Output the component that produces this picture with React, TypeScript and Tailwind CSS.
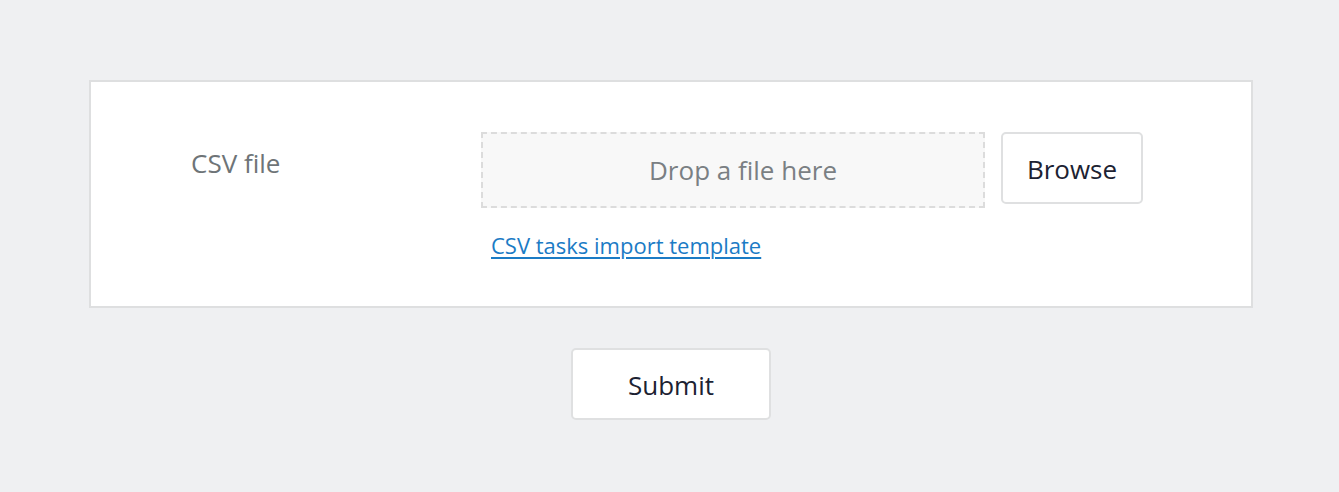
import React from "react";

export default function App() {
  return (
    <div
      className="min-h-[492px] w-full bg-[#eff0f2] pt-[80px]"
      style={{ fontFamily: '"Open Sans", "Noto Sans", sans-serif' }}
    >
      <div className="ml-[89px] w-[1164px]">
        <div className="border-2 border-[#dedfe0] bg-white pl-[100px] pt-[50px] pb-[46px]">
          <div className="flex">
            <div className="w-[290px] pt-[13px] text-[26px] leading-[36px] text-[#6e7477]">
              CSV file
            </div>
            <div className="flex flex-col">
              <div className="flex items-start gap-[16px]">
                <div className="flex h-[76px] w-[504px] items-center justify-center border-2 border-dashed border-[#dcdcdc] bg-[#f8f8f8] pl-[20px] text-[26px] text-[#7a7f83]">
                  Drop a file here
                </div>
                <button className="flex h-[72px] w-[142px] items-center justify-center rounded-[5px] border-2 border-[#dfe0e1] bg-white pt-[3px] text-[26px] text-[#1c2232]">
                  Browse
                </button>
              </div>
              <a
                href="#"
                className="ml-[10px] mt-[22px] text-[22px] leading-[30px] text-[#1b7bc5] underline decoration-[2px] underline-offset-[3px]"
              >
                CSV tasks import template
              </a>
            </div>
          </div>
        </div>
        <div className="mt-[40px] flex justify-center">
          <button className="flex h-[72px] w-[200px] items-center justify-center rounded-[5px] border-2 border-[#dfe0e1] bg-white pt-[2px] text-[26px] text-[#1c2232]">
            Submit
          </button>
        </div>
      </div>
    </div>
  );
}
